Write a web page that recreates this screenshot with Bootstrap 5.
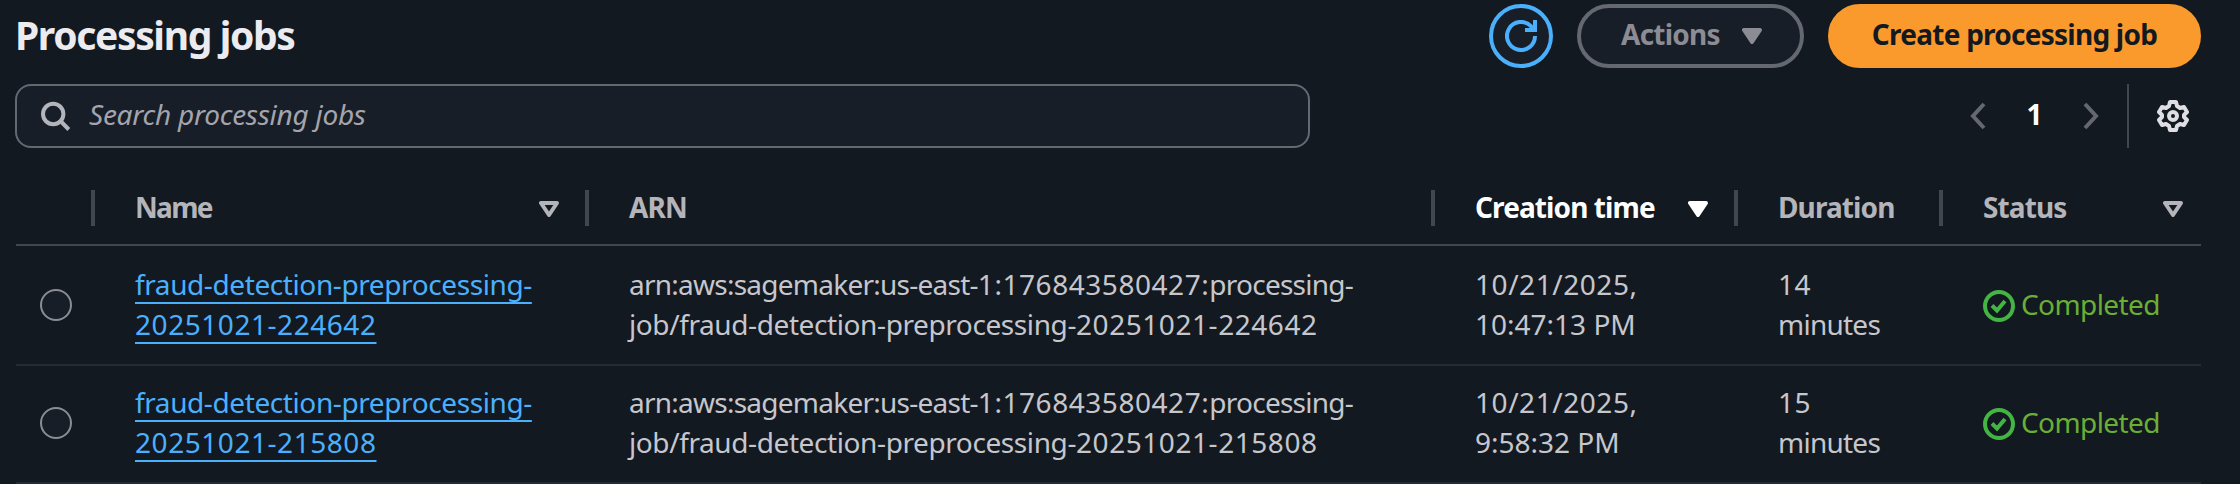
<!DOCTYPE html>
<html lang="en" data-bs-theme="dark">
<head>
<meta charset="utf-8">
<title>Processing jobs</title>
<link rel="stylesheet" href="https://cdn.jsdelivr.net/npm/bootstrap@5.3.0/dist/css/bootstrap.min.css">
<style>
  body { background:#131920; color:#c6c6cd; font-family:"Noto Sans","Open Sans",sans-serif; font-size:28px; line-height:40px; overflow:hidden; }
  .page { padding:4px 39px 0 15px; height:484px; }
  .page svg { display:block; flex:none; }
  .title { font-size:39px; line-height:62px; padding-bottom:2px; font-weight:700; color:#ebebf0; letter-spacing:-1.35px; }
  .pill { height:64px; border-radius:32px; border:4px solid; font-size:28px; font-weight:700; line-height:40px; padding:0 40px; display:flex; align-items:center; }
  .pill span { padding-bottom:4px; letter-spacing:-.75px; }
  .pill-icon { width:64px; padding:0; justify-content:center; color:#4bb0fc; background:#181e28; border-color:#4bb0fc; }
  .pill-actions, .pill-actions:disabled { width:227px; padding-right:38px; color:#8c8c94; background:#181e28; border-color:#656871; opacity:1; }
  .pill-create { width:373px; padding:0; justify-content:center; color:#131920; background:#fa9a2c; border-color:#fa9a2c; }
  .search { width:1295px; height:64px; border:2px solid #656871; border-radius:16px; background:#181e28; padding-left:23px; gap:17px; }
  .search input { font-style:italic; font-size:28px; line-height:40px; color:#c6c6cd; letter-spacing:-.26px; }
  .search input::placeholder { color:#a4a4ad; opacity:1; }
  .pager { color:#656871; padding-right:12px; }
  .current { color:#fff; font-weight:700; width:97px; text-align:center; padding-bottom:4px; }
  .rule { width:2px; height:64px; margin:0 28px; background:#424650; }
  .jobs { --bs-table-bg:transparent; width:2185px; table-layout:fixed; margin:22px 0 0 1px; border-collapse:separate; border-spacing:0; }
  .jobs > thead > tr > th { height:76px; padding:0 0 0 40px; border-bottom:2px solid #424650; color:#b4b4bb; vertical-align:middle; position:relative; white-space:nowrap; letter-spacing:-.9px; }
  .jobs > thead > tr > th:not(:last-child)::after { content:""; position:absolute; right:0; top:20px; width:4px; height:36px; background:#424650; }
  .jobs > tbody > tr > td { padding:18px 0 20px 40px; border-bottom:2px solid #232b37; color:#c6c6cd; vertical-align:middle; white-space:nowrap; letter-spacing:-.4px; }
  .jobs > tbody > tr + tr > td { padding-top:16px; }
  .jobs > tbody > tr > td.pick { padding-left:24px; padding-top:20px; }
  .jobs > tbody > tr + tr > td.pick { padding-top:18px; }
  .jobs > thead > tr > th.sorted { color:#fff; }
  .jobs > thead > tr > th.narrow { letter-spacing:-1.7px; }
  .sort { margin:4px 30px 0 auto; }
  .sort-end { margin-right:18px; }
  .jobs a { color:#4bb0fc; text-decoration:underline; text-decoration-thickness:2px; text-underline-offset:7px; text-decoration-skip-ink:none; }
  .jobs .form-check-input { display:block; float:none; width:32px; height:32px; margin:0; border:2px solid #8c8c94; background:#181e28; }
  .num { letter-spacing:.55px; }
  .tight { letter-spacing:-.75px; }
  .clock { letter-spacing:0; }
  .done { color:#6aaf35; gap:6px; letter-spacing:-.6px; }
  .done svg { margin-top:4px; color:#43b543; }
</style>
</head>
<body>
<svg class="d-none">
  <symbol id="sort-open" viewBox="0 0 20 16"><path d="M2 2h16l-8 12z" fill="none" stroke="currentColor" stroke-width="4" stroke-linejoin="round"/></symbol>
  <symbol id="sort-full" viewBox="0 0 20 16"><path d="M2 2h16l-8 12z" fill="currentColor" stroke="currentColor" stroke-width="4" stroke-linejoin="round"/></symbol>
  <symbol id="check" viewBox="0 0 32 32"><g fill="none" stroke="currentColor" stroke-width="4"><circle cx="16" cy="16" r="14"/><path d="M9 15.500l5 5L22 11"/></g></symbol>
</svg>
<main class="page">
  <header class="d-flex align-items-center justify-content-between">
    <h1 class="title m-0">Processing jobs</h1>
    <div class="d-flex gap-4">
      <button class="btn pill pill-icon" aria-label="Refresh"><svg width="32" height="32" viewBox="0 0 32 32" fill="none" stroke="currentColor" stroke-width="4"><path d="M30 16A14 14 0 1 1 26 6.2L29 10"/><path d="M30 0v10H20"/></svg></button>
      <button class="btn pill pill-actions" disabled><span>Actions</span><svg class="ms-auto" width="20" height="16"><use href="#sort-full"/></svg></button>
      <button class="btn pill pill-create"><span>Create processing job</span></button>
    </div>
  </header>

  <div class="d-flex align-items-center justify-content-between mt-3">
    <label class="search d-flex align-items-center">
      <svg width="32" height="32" viewBox="0 0 32 32" fill="none" stroke="#b4b4bb" stroke-width="4"><circle cx="13.200" cy="14" r="10.200"/><path d="M20 20.500l8.800 9"/></svg>
      <input class="form-control border-0 bg-transparent shadow-none p-0 pb-1" placeholder="Search processing jobs">
    </label>
    <nav class="pager d-flex align-items-center">
      <svg width="16" height="28" viewBox="0 0 16 28" fill="none" stroke="currentColor" stroke-width="4"><path d="M14 2L3 14l11 12"/></svg>
      <span class="current">1</span>
      <svg width="16" height="28" viewBox="0 0 16 28" fill="none" stroke="currentColor" stroke-width="4"><path d="M2 2l11 12L2 26"/></svg>
      <span class="rule"></span>
      <svg width="32" height="32" viewBox="0 0 32 32" fill="none" stroke="#dedee3" stroke-width="4" stroke-linejoin="round"><path d="M13 2h6l1 4 3 2 4-1 3 5-3 3v2l3 3-3 5-4-1-3 2-1 4h-6l-1-4-3-2-4 1-3-5 3-3v-2l-3-3 3-5 4 1 3-2z"/><circle cx="16" cy="16" r="4"/></svg>
    </nav>
  </div>

  <table class="table jobs">
    <colgroup><col style="width:79px"><col style="width:494px"><col style="width:846px"><col style="width:303px"><col style="width:205px"><col style="width:258px"></colgroup>
    <thead>
      <tr>
        <th></th>
        <th class="narrow"><div class="d-flex align-items-center">Name<svg class="sort" width="20" height="16"><use href="#sort-open"/></svg></div></th>
        <th>ARN</th>
        <th class="sorted"><div class="d-flex align-items-center">Creation time<svg class="sort" width="20" height="16"><use href="#sort-full"/></svg></div></th>
        <th>Duration</th>
        <th><div class="d-flex align-items-center">Status<svg class="sort sort-end" width="20" height="16"><use href="#sort-open"/></svg></div></th>
      </tr>
    </thead>
    <tbody>
      <tr>
        <td class="pick"><input class="form-check-input" type="radio" name="job"></td>
        <td><a href="#">fraud-detection-preprocessing-<br><span class="num">20251021-224642</span></a></td>
        <td><span class="tight">arn:aws:sagemaker:us-east-</span><span class="num">1:176843580427:</span><span class="tight">processing-</span><br>job/fraud-detection-preprocessing-<span class="num">20251021-224642</span></td>
        <td><span class="num">10/21/2025,</span><br><span class="clock">10:47:13 PM</span></td>
        <td><span class="num">14</span><br><span class="tight">minutes</span></td>
        <td><span class="done d-flex align-items-center"><svg width="32" height="32"><use href="#check"/></svg>Completed</span></td>
      </tr>
      <tr>
        <td class="pick"><input class="form-check-input" type="radio" name="job"></td>
        <td><a href="#">fraud-detection-preprocessing-<br><span class="num">20251021-215808</span></a></td>
        <td><span class="tight">arn:aws:sagemaker:us-east-</span><span class="num">1:176843580427:</span><span class="tight">processing-</span><br>job/fraud-detection-preprocessing-<span class="num">20251021-215808</span></td>
        <td><span class="num">10/21/2025,</span><br><span class="clock">9:58:32 PM</span></td>
        <td><span class="num">15</span><br><span class="tight">minutes</span></td>
        <td><span class="done d-flex align-items-center"><svg width="32" height="32"><use href="#check"/></svg>Completed</span></td>
      </tr>
    </tbody>
  </table>
</main>
<script src="https://cdn.jsdelivr.net/npm/bootstrap@5.3.0/dist/js/bootstrap.bundle.min.js"></script>
</body>
</html>
